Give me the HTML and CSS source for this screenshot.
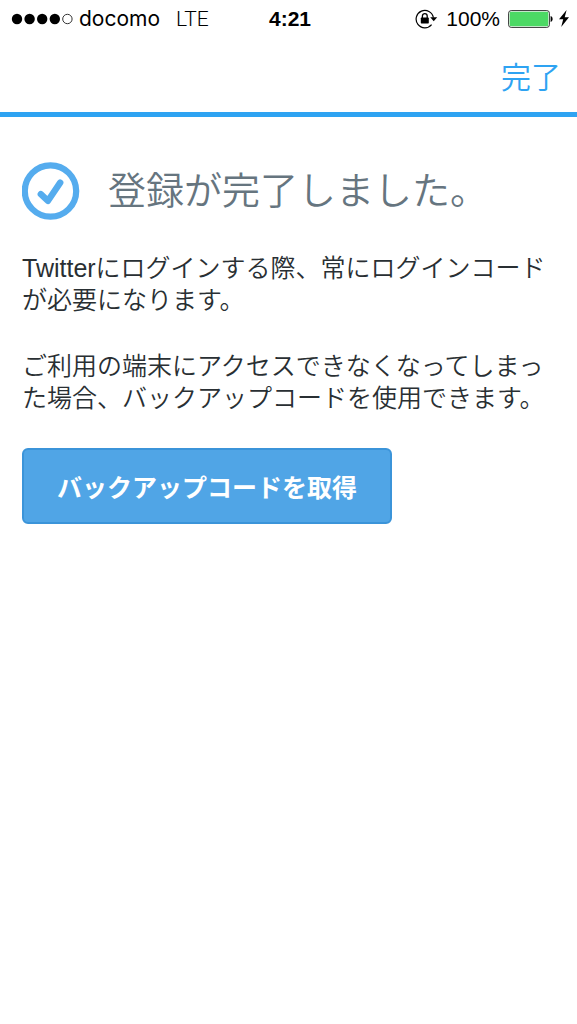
FILE: index.html
```html
<!DOCTYPE html>
<html lang="ja">

<head>
  <meta charset="UTF-8" />
  <meta name="viewport" content="width=device-width, initial-scale=1.0" />
  <title>登録完了</title>
  <link rel="stylesheet" href="styles.css">
</head>

<body>

  <div class="status-bar">
    <div class="status-left">
      <svg class="signal" width="62" height="12" viewBox="0 0 62 12">
        <circle cx="6" cy="6" r="5.2" />
        <circle cx="18.6" cy="6" r="5.2" />
        <circle cx="31.2" cy="6" r="5.2" />
        <circle cx="43.8" cy="6" r="5.2" />
        <circle cx="56.4" cy="6" r="4.7" fill="none" stroke="#333" stroke-width="1" />
      </svg>
      <span class="carrier">docomo</span>
      <span class="network">LTE</span>
    </div>
    <div class="clock">4:21</div>
    <div class="status-right">
      <svg class="rotation-lock" width="23" height="20" viewBox="0 0 23 20">
        <path d="M18.4 8.6A8.7 8.7 0 1 0 16.6 15.6" fill="none" stroke="#000" stroke-width="1.2" />
        <path d="M15.2 8.3h7l-3.5 4z" />
        <rect x="5.8" y="8.6" width="8" height="5.8" rx=".6" />
        <path d="M7.4 9V7a2.4 2.4 0 0 1 4.8 0v2" fill="none" stroke="#000" stroke-width="1.3" />
      </svg>
      <span class="percent">100%</span>
      <svg class="battery" width="45" height="18" viewBox="0 0 45 18">
        <rect x=".6" y=".6" width="40.8" height="16.8" rx="2.6" fill="#fff" stroke="#333" stroke-width="1" />
        <rect x="1.7" y="1.7" width="38.6" height="14.6" rx="1.4" fill="#4cd964" />
        <path d="M42.6 6v6c1.4-.4 2-1.6 2-3s-.6-2.6-2-3z" />
      </svg>
      <svg class="bolt" width="10" height="17" viewBox="0 0 10 17">
        <path d="M7.6 0L0 9.3h4.2L2.2 17 10 7.2H5.7z" />
      </svg>
    </div>
  </div>

  <header>
    <a href="#" class="done">完了</a>
  </header>

  <main>
    <div class="title">
      <svg class="check" width="58" height="58" viewBox="0 0 58 58">
        <circle cx="28.5" cy="29" r="25.7" fill="none" stroke="#55acee" stroke-width="6.2" />
        <path d="M18.8 32.2l7.2 6.6L38.2 20.600" fill="none" stroke="#55acee" stroke-width="6.4" stroke-linecap="round" stroke-linejoin="round" />
      </svg>
      <h1>登録が完了しました。</h1>
    </div>

    <p>Twitterにログインする際、常にログインコードが必要になります。</p>
    <p>ご利用の端末にアクセスできなくなってしまった場合、バックアップコードを使用できます。</p>

    <button type="button" class="backup-btn">バックアップコードを取得</button>
  </main>

</body>

</html>
```
FILE: styles.css
```css
* {
  box-sizing: border-box;
}

body {
  margin: 0;
  background-color: #fff;
  color: #292f33;
  font-family: "Liberation Sans", "Noto Sans CJK JP", sans-serif;
}

.status-bar {
  display: grid;
  grid-template-columns: 1fr auto 1fr;
  align-items: center;
  height: 37px;
  padding: 0 8px 0 11px;
  color: #000;
  font-size: 21px;
}

.status-left,
.status-right {
  display: flex;
  align-items: center;
}

.status-right {
  justify-content: flex-end;
}

.carrier {
  margin-left: 6px;
  font-family: Inter, sans-serif;
}

.network {
  margin-left: 16px;
  font-family: Roboto, sans-serif;
  font-weight: 300;
}

.clock {
  font-weight: bold;
}

.percent {
  margin: 0 8px;
}

.bolt {
  margin-left: 6px;
}

header {
  display: flex;
  justify-content: flex-end;
  align-items: center;
  height: 80px;
  padding: 0 16px;
  border-bottom: 5px solid #2ea3f2;
}

.done {
  color: #2ea3f2;
  font-family: "Noto Sans CJK JP", sans-serif;
  font-size: 30px;
  font-weight: 350;
  line-height: 32px;
  text-decoration: none;
}

main {
  padding: 45px 22px;
}

.title {
  display: flex;
  align-items: flex-start;
  gap: 28px;
  margin-bottom: 32px;
}

.check {
  flex: none;
}

h1 {
  margin: 0;
  color: #66757f;
  font-family: "Noto Sans CJK JP", sans-serif;
  font-size: 38px;
  font-weight: 350;
  line-height: 52px;
}

p {
  margin: 0 0 34px;
  font-size: 25px;
  line-height: 32px;
  font-weight: 350;
}

.backup-btn {
  height: 76px;
  padding: 0 33px;
  border: 2px solid #3b94d9;
  border-radius: 6px;
  background-color: #50a5e6;
  color: #fff;
  font-family: inherit;
  font-size: 25px;
  font-weight: bold;
  cursor: pointer;
}
```
